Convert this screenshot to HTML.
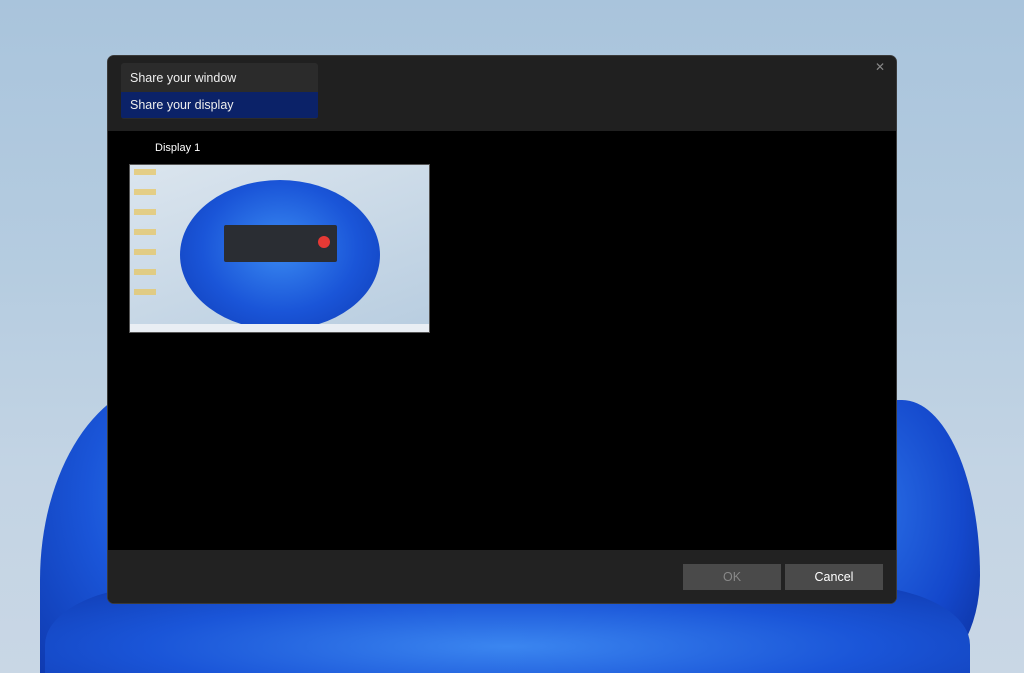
<!DOCTYPE html>
<html><head><meta charset="utf-8"><style>
*{margin:0;padding:0;box-sizing:border-box}
html,body{width:1024px;height:673px;overflow:hidden}
body{position:relative;font-family:"Liberation Sans",sans-serif;
background:linear-gradient(180deg,#a9c4dc 0%,#b5cce0 40%,#c3d4e4 70%,#c9d7e5 100%);}
.bl{position:absolute;}
.dlg{position:absolute;left:107px;top:55px;width:790px;height:549px;background:#000;border-radius:7px;overflow:hidden;border:1px solid #3a3a3a}
.hdr{position:absolute;left:0;top:0;right:0;height:75px;background:#202020}
.ftr{position:absolute;left:0;bottom:0;right:0;height:53px;background:#222}
.dd{position:absolute;left:13px;top:7px;width:197px;height:56px;background:#2b2b2b;border-radius:3px;overflow:hidden}
.it{height:29px;color:#eee;font-size:12.5px;line-height:31px;padding-left:9px}
.sel{background:#0b2268;height:26px;line-height:26px}
.btn{position:absolute;top:14px;width:98px;height:26px;color:#fff;font-size:12.5px;text-align:center;line-height:26px}
</style></head><body>
<div class="bl" style="left:40px;top:380px;width:260px;height:293px;border-radius:130px 130px 0 0/200px 200px 0 0;background:radial-gradient(ellipse at 60% 40%,#2f7df0 0%,#1a55d8 50%,#0f3ab0 100%)"></div>
<div class="bl" style="left:820px;top:400px;width:160px;height:273px;border-radius:80px 80px 60px 0/180px 180px 100px 0;background:radial-gradient(ellipse at 30% 40%,#2a6fe6,#1448cc 60%,#0c2f9a)"></div>
<div class="bl" style="left:45px;top:585px;width:925px;height:88px;border-radius:120px 120px 0 0/60px 60px 0 0;background:radial-gradient(ellipse at 50% 70%,#3b86f0,#1a55d8 55%,#0f3ab0)"></div>
<div class="dlg">
 <div class="hdr"></div>
 <div style="position:absolute;left:767px;top:4px;color:#888;font-size:12px">✕</div>
 <div class="dd"><div class="it">Share your window</div><div class="it sel">Share your display</div></div>
 <div style="position:absolute;left:47px;top:86px;color:#fff;font-size:11px">Display 1</div>
 <div style="position:absolute;left:21px;top:108px;width:301px;height:169px;border:1px solid #555;background:linear-gradient(160deg,#dbe5ee,#b8cde0);overflow:hidden">
  <div style="position:absolute;left:50px;top:15px;width:200px;height:150px;border-radius:50%;background:radial-gradient(ellipse at 50% 45%,#3a8af2,#1a55d8 55%,#0e3ab3)"></div>
  <div style="position:absolute;left:94px;top:60px;width:113px;height:37px;background:#2a2d33;border-radius:2px"></div>
  <div style="position:absolute;left:188px;top:71px;width:12px;height:12px;border-radius:50%;background:#e53935"></div>
  <div style="position:absolute;left:0;bottom:0;width:100%;height:8px;background:#e9eef4"></div>
  <div style="position:absolute;left:4px;top:4px;width:22px;height:130px;background:repeating-linear-gradient(180deg,#e9c55a 0 6px,transparent 6px 20px);opacity:.7"></div>
 </div>
 <div class="ftr">
  <div class="btn" style="left:575px;background:#4a4a4a;color:#888">OK</div>
  <div class="btn" style="left:677px;background:#4a4a4a">Cancel</div>
 </div>
</div>
</body></html>
